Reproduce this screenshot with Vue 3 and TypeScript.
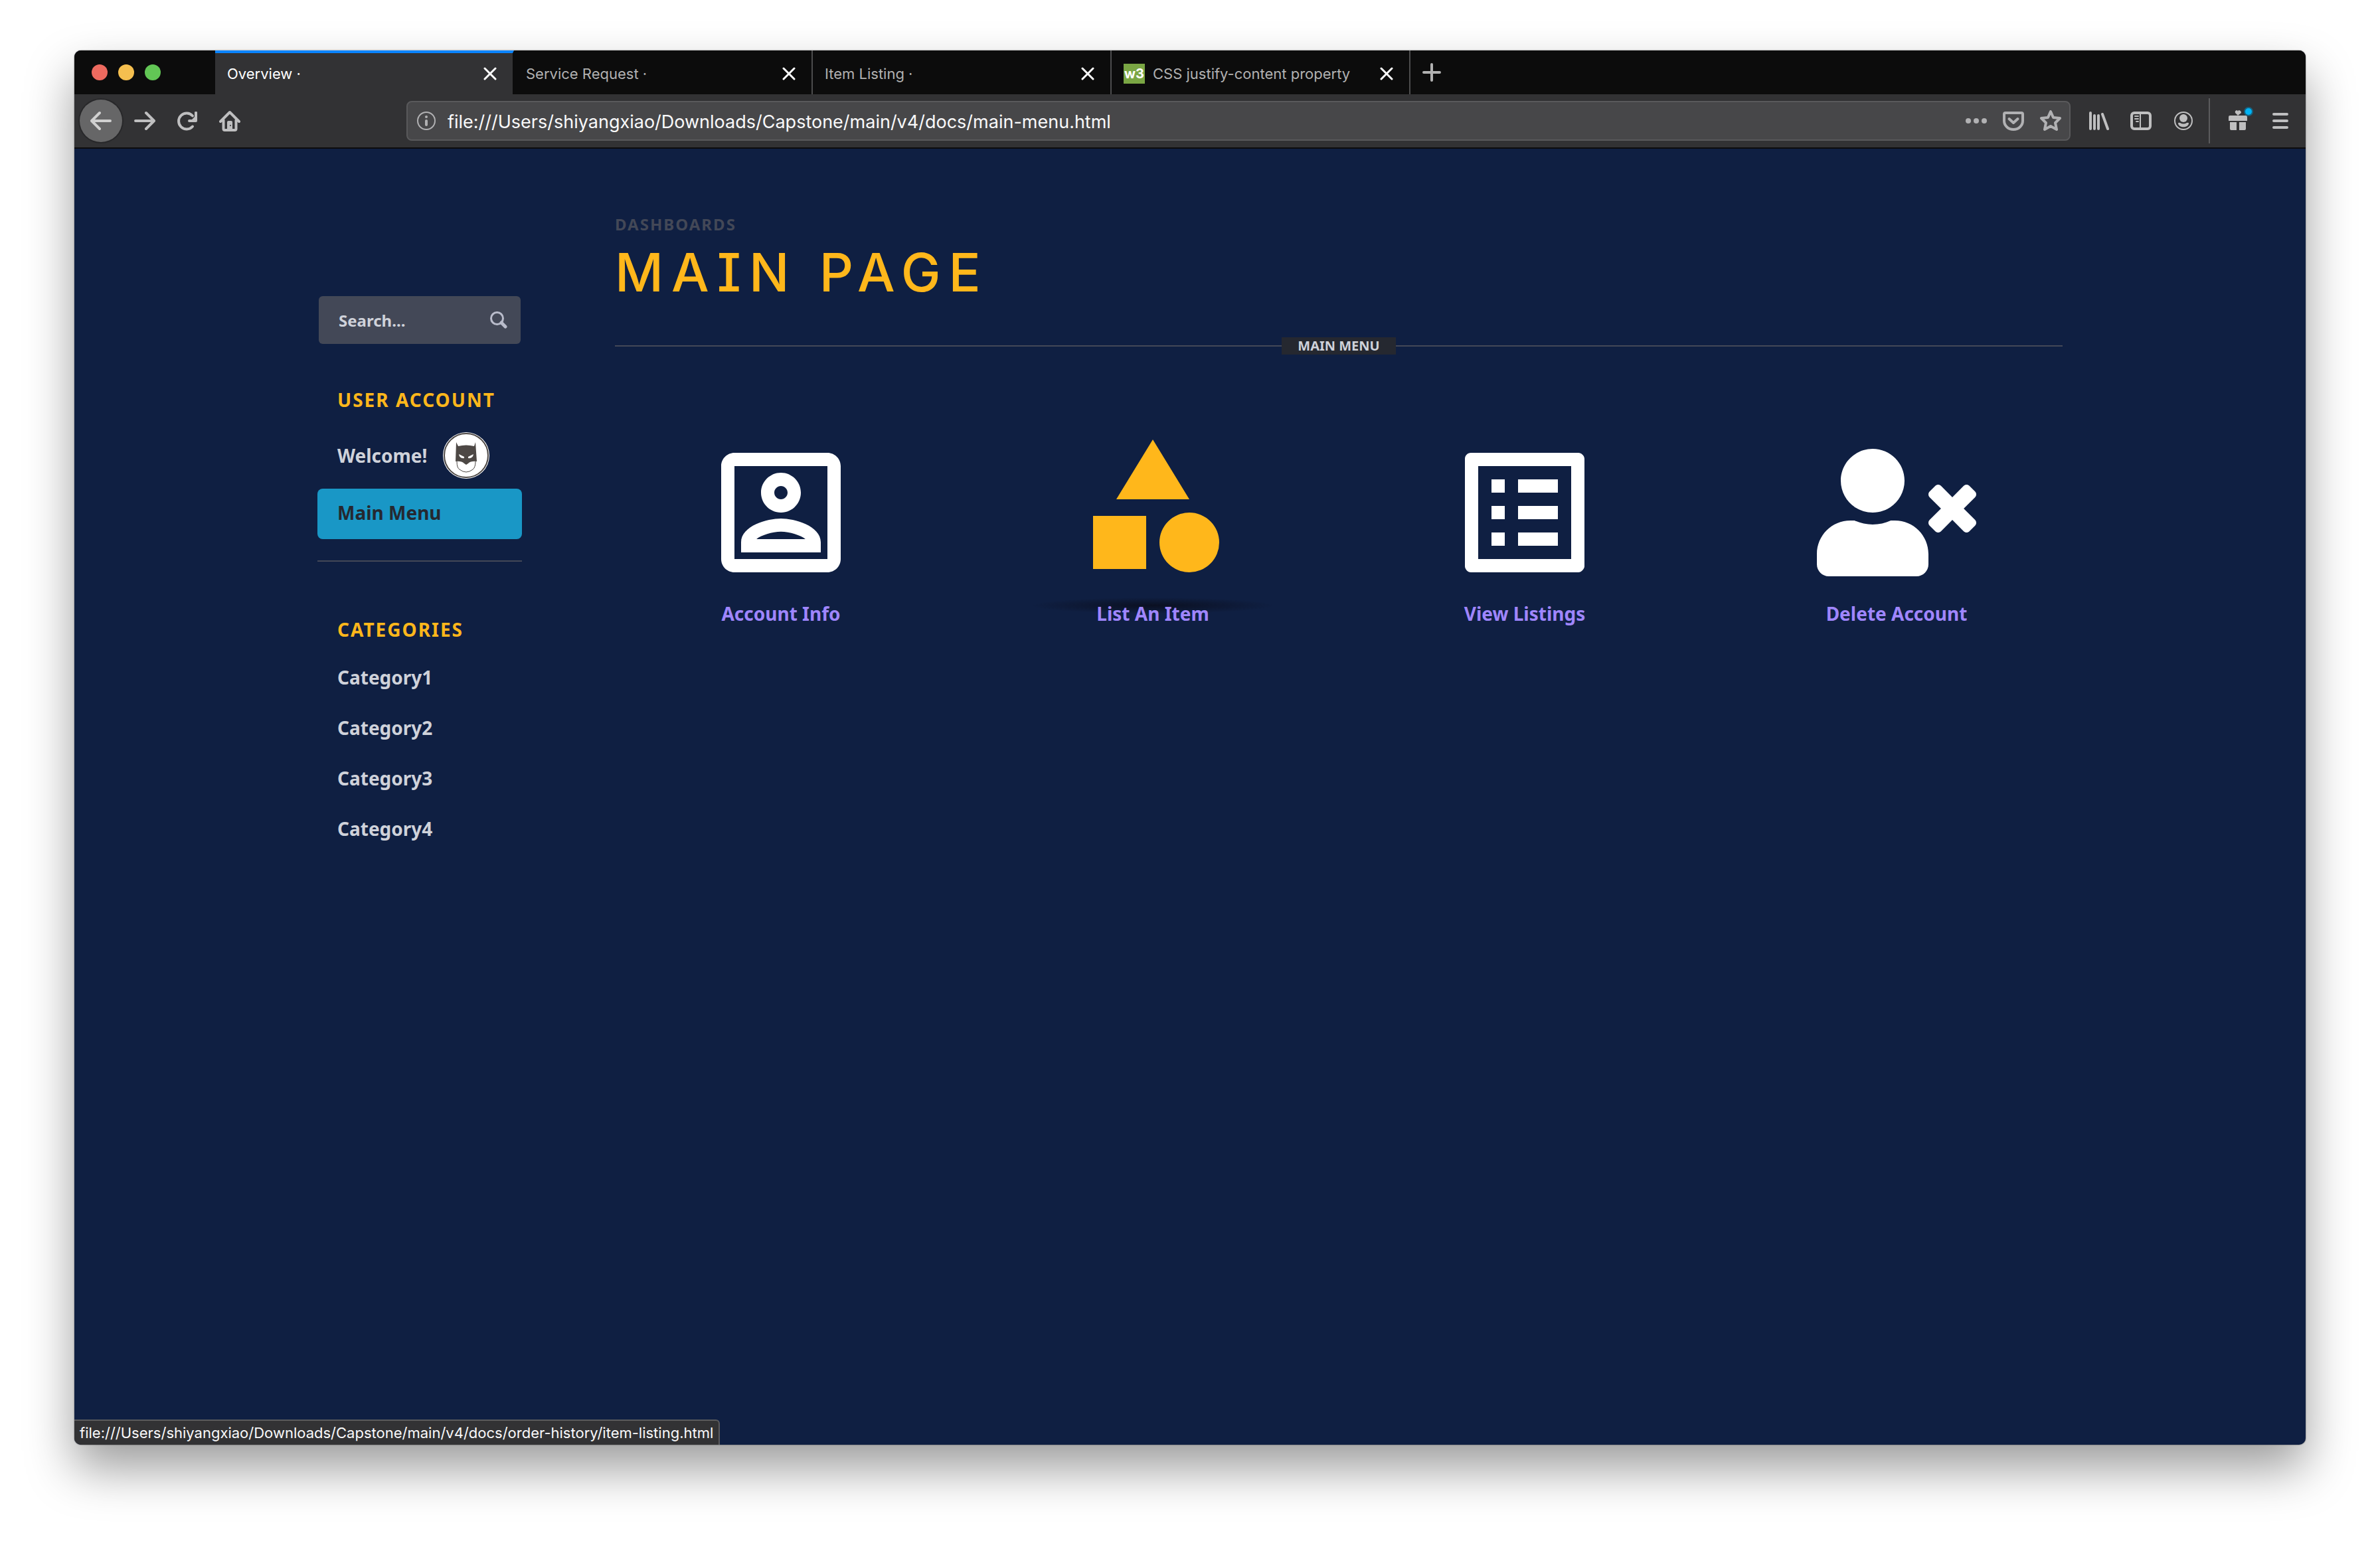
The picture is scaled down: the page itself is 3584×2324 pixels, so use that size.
<script setup lang="ts">
import { ref } from 'vue'

interface Tab {
  title: string
  favicon?: boolean
}

interface Action {
  label: string
  viewBox: string
  path: string
  raised?: boolean
}

const tabs: Tab[] = [
  { title: 'Overview ·' },
  { title: 'Service Request ·' },
  { title: 'Item Listing ·' },
  { title: 'CSS justify-content property', favicon: true },
]
const activeTab = ref(0)
const address = ref('file:///Users/shiyangxiao/Downloads/Capstone/main/v4/docs/main-menu.html')
const query = ref('')

const categories = ['Category1', 'Category2', 'Category3', 'Category4']

const actions: Action[] = [
  {
    label: 'Account Info',
    viewBox: '0 0 24 24',
    path: 'M19 5v14H5V5h14m0-2H5c-1.1 0-2 .9-2 2v14c0 1.1.9 2 2 2h14c1.1 0 2-.9 2-2V5c0-1.1-.9-2-2-2zm-7 9c-1.65 0-3-1.35-3-3s1.35-3 3-3 3 1.35 3 3-1.35 3-3 3zm0-4c-.55 0-1 .45-1 1s.45 1 1 1 1-.45 1-1-.45-1-1-1zm6 10H6v-1.53c0-2.5 3.97-3.58 6-3.58s6 1.08 6 3.58V18zm-9.69-2h7.38c-.69-.56-2.38-1.12-3.69-1.12s-3.01.56-3.69 1.12z',
  },
  {
    label: 'List An Item',
    viewBox: '0 0 24 24',
    path: 'M12 2l5.5 9h-11zM17.5 13a4.5 4.5 0 1 0 0 9 4.5 4.5 0 1 0 0-9zM3 13.5h8v8H3z',
    raised: true,
  },
  {
    label: 'View Listings',
    viewBox: '0 0 24 24',
    path: 'M19 5v14H5V5h14m1.1-2H3.9c-.5 0-.9.4-.9.9v16.2c0 .4.4.9.9.9h16.2c.4 0 .9-.5.9-.9V3.9c0-.5-.5-.9-.9-.9zM11 7h6v2h-6V7zm0 4h6v2h-6v-2zm0 4h6v2h-6v-2zM7 7h2v2H7V7zm0 4h2v2H7v-2zm0 4h2v2H7v-2z',
  },
  {
    label: 'Delete Account',
    viewBox: '0 0 640 512',
    path: 'M589.6 240l45.6-45.6c6.3-6.3 6.3-16.5 0-22.8l-22.8-22.8c-6.3-6.3-16.5-6.3-22.8 0L544 194.4l-45.6-45.6c-6.3-6.3-16.5-6.3-22.8 0l-22.8 22.8c-6.3 6.3-6.3 16.5 0 22.8l45.6 45.6-45.6 45.6c-6.3 6.3-6.3 16.5 0 22.8l22.8 22.8c6.3 6.3 16.5 6.3 22.8 0l45.6-45.6 45.6 45.6c6.3 6.3 16.5 6.3 22.8 0l22.8-22.8c6.3-6.3 6.3-16.5 0-22.8L589.6 240zM224 256c70.7 0 128-57.3 128-128S294.7 0 224 0 96 57.3 96 128s57.3 128 128 128zm89.6 32h-16.7c-22.2 10.2-46.9 16-72.9 16s-50.6-5.8-72.9-16h-16.7C60.2 288 0 348.2 0 422.4V464c0 26.5 21.5 48 48 48h352c26.5 0 48-21.5 48-48v-41.6c0-74.2-60.2-134.4-134.4-134.4z',
  },
]
</script>

<template>
  <div class="desktop">
    <div class="window">
      <header class="chrome">
        <div class="tabbar">
          <div class="lights">
            <button class="light red" aria-label="Close window"></button>
            <button class="light yellow" aria-label="Minimise window"></button>
            <button class="light green" aria-label="Zoom window"></button>
          </div>
          <div
            v-for="(tab, i) in tabs"
            :key="tab.title"
            class="tab"
            :class="{ active: i === activeTab }"
          >
            <button class="tab-title" @click="activeTab = i">
              <span v-if="tab.favicon" class="favicon">w3</span>
              {{ tab.title }}
            </button>
            <button class="tab-close" aria-label="Close tab">
              <svg width="20" height="20" viewBox="0 0 20 20" class="stroke">
                <path d="M2 2l16 16M18 2L2 18" stroke-width="3" />
              </svg>
            </button>
          </div>
          <button class="new-tab" aria-label="New tab">
            <svg width="28" height="28" viewBox="0 0 28 28" class="stroke">
              <path d="M14 2v24M2 14h24" stroke-width="4" />
            </svg>
          </button>
        </div>

        <div class="toolbar">
          <button class="tool back" aria-label="Back">
            <svg width="32" height="32" viewBox="0 0 32 32" class="stroke">
              <path d="M30 16H3M14 4L2 16l12 12" stroke-width="4" />
            </svg>
          </button>
          <button class="tool" aria-label="Forward">
            <svg width="32" height="32" viewBox="0 0 32 32" class="stroke">
              <path d="M2 16h27M18 4l12 12-12 12" stroke-width="4" />
            </svg>
          </button>
          <button class="tool" aria-label="Reload">
            <svg width="32" height="32" viewBox="0 0 32 32">
              <path d="M24 24.500A12 12 0 1 1 24 8.500" fill="none" stroke="currentColor" stroke-width="4" stroke-linecap="round" />
              <path d="M27 3q0-1 2-1t2 1v13q0 2-2 2H19q-2 0-2-2t2-2h4l4-4z" fill="currentColor" />
            </svg>
          </button>
          <button class="tool" aria-label="Home">
            <svg width="32" height="32" viewBox="0 0 32 32" class="stroke">
              <path d="M2 17L16 3l14 14M6.500 15v13q0 2 2 2h15q2 0 2-2V15" stroke-width="4" />
              <path d="M12 30V18q0-2 2-2h4q2 0 2 2v12z" fill="currentColor" stroke="none" />
              <circle cx="17" cy="23" r="1" fill="#323234" stroke="none" />
            </svg>
          </button>

          <div class="urlbar">
            <svg width="32" height="32" viewBox="0 0 32 32" class="info">
              <circle cx="16" cy="16" r="13" fill="none" stroke="currentColor" stroke-width="2" />
              <circle cx="16" cy="10" r="2" fill="currentColor" />
              <path d="M16 16v6" stroke="currentColor" stroke-width="4" stroke-linecap="round" />
            </svg>
            <input v-model="address" class="address" type="text" aria-label="Address" />
            <button class="url-tool" aria-label="Page actions">
              <svg width="32" height="32" viewBox="0 0 32 32" fill="currentColor">
                <circle cx="4" cy="16" r="4" />
                <circle cx="16" cy="16" r="4" />
                <circle cx="28" cy="16" r="4" />
              </svg>
            </button>
            <button class="url-tool" aria-label="Save to Pocket">
              <svg width="32" height="32" viewBox="0 0 32 32" class="stroke">
                <path d="M4 4h24q2 0 2 2v10a14 13 0 0 1-28 0V6q0-2 2-2zM9.500 13l6.500 6 6.500-6" stroke-width="4" />
              </svg>
            </button>
            <button class="url-tool" aria-label="Bookmark">
              <svg width="32" height="32" viewBox="0 0 32 32" class="stroke">
                <path d="M16 2l4 9 10 1-7 7 2 10-9-5-9 5 2-10-7-7 10-1z" stroke-width="4" />
              </svg>
            </button>
          </div>

          <button class="tool" aria-label="Library">
            <svg width="32" height="32" viewBox="0 0 32 32" class="stroke">
              <path d="M4 4v24M10 8v20M16 8v20M22 6l8 22" stroke-width="4" />
            </svg>
          </button>
          <button class="tool" aria-label="Sidebars">
            <svg width="32" height="32" viewBox="0 0 32 32" class="stroke">
              <rect x="2" y="4" width="28" height="24" rx="4" stroke-width="4" />
              <path d="M15 4v24M7 9h5M7 13h5M9 17h3" stroke-width="2" />
            </svg>
          </button>
          <button class="tool" aria-label="Account">
            <svg width="32" height="32" viewBox="0 0 32 32">
              <circle cx="16" cy="16" r="13" fill="none" stroke="currentColor" stroke-width="2" />
              <circle cx="16" cy="12" r="6" fill="currentColor" />
              <path d="M8 20q0-2 3-1 5 3 10 0 3-1 3 1c-1 7-15 7-16 0z" fill="currentColor" />
            </svg>
          </button>
          <span class="separator"></span>
          <button class="tool" aria-label="What's new">
            <svg width="32" height="32" viewBox="0 0 32 32" fill="currentColor" overflow="visible">
              <path d="M16 8l-4-4q-1-3 2-4 2 0 2 2 0-2 2-2 3 1 3 4z" />
              <path d="M4 8h24q2 0 2 2v6H2v-6q0-2 2-2zM4 18h10v12H6q-2 0-2-2zM18 18h10v10q0 2-2 2h-8z" />
              <circle cx="32" cy="2" r="7" fill="#17617f" />
              <circle cx="32" cy="2" r="5" fill="#00b3f4" />
            </svg>
          </button>
          <button class="tool" aria-label="Menu">
            <svg width="32" height="32" viewBox="0 0 32 32" class="stroke">
              <path d="M6 6h20M6 16h20M6 26h20" stroke-width="4" />
            </svg>
          </button>
        </div>
      </header>

      <div class="page">
        <aside class="sidebar">
          <form class="search" @submit.prevent>
            <input v-model="query" type="text" placeholder="Search..." aria-label="Search" />
            <button aria-label="Search">
              <svg width="26" height="26" viewBox="0 0 26 26">
                <circle cx="10.500" cy="10.500" r="9" fill="none" stroke="currentColor" stroke-width="3" />
                <path d="M17 17l6 6" stroke="currentColor" stroke-width="5" stroke-linecap="round" />
              </svg>
            </button>
          </form>

          <nav>
            <h2>USER ACCOUNT</h2>
            <a href="#" class="nav-link welcome">
              Welcome!
              <svg width="70" height="70" viewBox="0 0 70 70">
                <circle cx="35" cy="35" r="35" fill="#fff" />
                <circle cx="35" cy="35" r="33" fill="none" stroke="#4d4845" stroke-width="2" />
                <path d="M20 15l3 6q12-3 24 0l2-6 2 29q-9-1-13 3l-3 2-3-2q-4-4-13-3z" fill="#4d4845" />
                <path d="M24 33l8 4v2q-7 1-8-6zM46 33l-8 4v2q7 1 8-6z" fill="#fff" />
                <path d="M21 44q0 10 4 12 10 8 20 0 4-3 4-12" fill="none" stroke="#4d4845" stroke-width="1" />
              </svg>
            </a>
            <a href="#" class="nav-link current">Main Menu</a>
            <hr />
            <h2 class="second">CATEGORIES</h2>
            <a v-for="c in categories" :key="c" href="#" class="nav-link">{{ c }}</a>
          </nav>
        </aside>

        <main class="content">
          <h6>DASHBOARDS</h6>
          <h1>MAIN PAGE</h1>
          <div class="divider"><h3>MAIN MENU</h3></div>
          <div class="actions">
            <a
              v-for="a in actions"
              :key="a.label"
              href="#"
              class="action"
              :class="{ raised: a.raised }"
            >
              <svg width="240" height="240" :viewBox="a.viewBox" fill="currentColor">
                <path :d="a.path" />
              </svg>
              <span>{{ a.label }}</span>
            </a>
          </div>
        </main>
      </div>

      <div class="status">file:///Users/shiyangxiao/Downloads/Capstone/main/v4/docs/order-history/item-listing.html</div>
    </div>
  </div>
</template>

<style>
body {
  background: #fff;
}
</style>

<style scoped>
* {
  box-sizing: border-box;
}

h1,
h2,
h3,
h6 {
  margin: 0;
}

svg {
  display: block;
  flex: none;
}

button {
  display: flex;
  align-items: center;
  justify-content: center;
  padding: 0;
  border: 0;
  background: none;
  color: inherit;
  font: inherit;
}

a {
  text-decoration: none;
}

.stroke {
  fill: none;
  stroke: currentColor;
  stroke-linecap: round;
  stroke-linejoin: round;
}

.desktop {
  display: flex;
  min-height: 100vh;
  padding: 76px 112px 148px;
}

.window {
  position: relative;
  display: flex;
  flex: 1;
  flex-direction: column;
  overflow: hidden;
  border-radius: 10px;
  background: #0f1f42;
  box-shadow: 0 0 2px rgba(0, 0, 0, 0.6), 0 36px 72px rgba(0, 0, 0, 0.39);
}

/* Browser chrome */
.chrome {
  border-bottom: 2px solid #0c0c0d;
  background: #323234;
  color: #bfbfc0;
  font-family: Inter, 'Liberation Sans', sans-serif;
}

.tabbar {
  display: flex;
  height: 66px;
  background: #0c0c0c;
}

.lights {
  display: flex;
  align-items: center;
  gap: 16px;
  width: 212px;
  padding-left: 26px;
}

.light {
  width: 24px;
  height: 24px;
  border-radius: 50%;
}

.red {
  background: #ed6a5f;
}

.yellow {
  background: #f5bf4f;
}

.green {
  background: #62c655;
}

.tab {
  display: flex;
  align-items: center;
  justify-content: space-between;
  width: 450px;
  padding: 4px 24px 0 18px;
  border-right: 2px solid #4c4c4d;
  color: #b1b1b1;
  font-size: 22px;
}

.tab.active {
  padding-top: 0;
  border-right-color: #0c0c0c;
  border-top: 4px solid #0a84ff;
  background: #323234;
  color: #fff;
}

.tab-title {
  gap: 12px;
  height: 62px;
  white-space: nowrap;
}

.tab-close {
  color: #fff;
}

.favicon {
  width: 32px;
  height: 30px;
  background: #7aa644;
  color: #fff;
  font-size: 20px;
  font-weight: 700;
  line-height: 30px;
}

.new-tab {
  padding: 0 18px;
  color: #b1b1b1;
}

.toolbar {
  display: flex;
  align-items: center;
  height: 80px;
  padding: 0 6px 0 8px;
}

.tool {
  width: 64px;
  height: 64px;
}

.back {
  margin-right: 2px;
  border-radius: 50%;
  background: #666667;
  box-shadow: 0 0 0 2px #28282a;
  color: #d0d0d0;
}

.urlbar {
  display: flex;
  flex: 1;
  align-items: center;
  height: 60px;
  margin: 0 10px 0 234px;
  padding-left: 12px;
  border: 2px solid #59595b;
  border-radius: 8px;
  background: #474749;
  color: #b1b1b3;
}

.address {
  flex: 1;
  min-width: 0;
  height: 56px;
  margin-left: 16px;
  padding: 2px 0 0;
  border: 0;
  outline: 0;
  background: none;
  color: #f9f9fa;
  font-family: inherit;
  font-size: 27px;
}

.url-tool {
  width: 56px;
  height: 56px;
}

.separator {
  width: 2px;
  height: 68px;
  margin: 0 10px 0 6px;
  background: #5b5b5d;
}

/* Page */
.page {
  display: grid;
  grid-template-columns: minmax(0, 1fr) minmax(0, 5fr);
  flex: 1;
  width: 80%;
  margin: 0 auto;
  color: #cfd2da;
  font-family: 'Noto Sans', 'Open Sans', sans-serif;
  font-size: 28px;
  font-weight: 700;
}

.sidebar {
  padding: 222px 110px 0 30px;
}

.search {
  display: flex;
  align-items: center;
  height: 72px;
  margin: 0 2px;
  padding: 0 20px 0 30px;
  border-radius: 6px;
  background: #434857;
  color: #b9bccb;
}

.search input {
  flex: 1;
  min-width: 0;
  padding: 0;
  border: 0;
  outline: 0;
  background: none;
  color: #cfd2da;
  font: inherit;
  font-size: 24px;
}

.search input::placeholder {
  color: #cfd2da;
  opacity: 1;
}

h2 {
  margin: 64px 0 28px 30px;
  color: #ffb71b;
  font-size: 28px;
  font-weight: 700;
  letter-spacing: 2px;
  line-height: 40px;
  white-space: nowrap;
}

h2.second {
  margin: 82px 0 16px 30px;
}

.nav-link {
  display: flex;
  align-items: center;
  height: 76px;
  padding: 0 30px 4px;
  border-radius: 8px;
  color: #cfd2da;
}

.welcome {
  gap: 24px;
  margin-bottom: 10px;
}

.current {
  background: #1997c6;
  color: #252830;
}

hr {
  height: 2px;
  margin: 32px 0 0;
  border: 0;
  background: #434857;
}

.content {
  padding: 98px 30px 0;
}

h6 {
  color: #434857;
  font-size: 24px;
  font-weight: 700;
  letter-spacing: 2px;
  line-height: 32px;
}

h1 {
  margin-top: 12px;
  color: #ffb71b;
  font-family: Inter, 'DejaVu Sans', sans-serif;
  font-feature-settings: 'cv08';
  font-size: 80px;
  font-weight: 500;
  letter-spacing: 12px;
  line-height: 88px;
}

.divider {
  display: flex;
  align-items: center;
  margin-top: 54px;
}

.divider::before,
.divider::after {
  flex: 1;
  height: 2px;
  background: #434857;
  content: '';
}

h3 {
  padding: 0 24px;
  background: #252830;
  font-size: 20px;
  font-weight: 700;
  line-height: 26px;
}

.actions {
  display: grid;
  grid-template-columns: repeat(4, 1fr);
  margin: 118px -30px 0;
}

.action {
  position: relative;
  display: flex;
  flex-direction: column;
  align-items: center;
  gap: 12px;
  color: #fff;
}

.action span {
  position: relative;
  color: #9f86ff;
  line-height: 40px;
}

.raised {
  color: #ffb71b;
}

.raised svg {
  transform: translateY(-10px);
}

.raised::before {
  position: absolute;
  bottom: 20px;
  width: 360px;
  height: 24px;
  background: radial-gradient(ellipse at center, rgba(10, 14, 30, 0.9) 0%, rgba(10, 14, 30, 0) 72%);
  content: '';
}

/* Link target shown over the page corner */
.status {
  position: absolute;
  bottom: 0;
  left: 0;
  padding: 0 8px;
  border-top: 2px solid #5b5b5d;
  border-right: 2px solid #5b5b5d;
  border-top-right-radius: 6px;
  background: #323234;
  color: #f9f9fa;
  font-family: Inter, 'Liberation Sans', sans-serif;
  font-size: 22px;
  line-height: 36px;
}
</style>
